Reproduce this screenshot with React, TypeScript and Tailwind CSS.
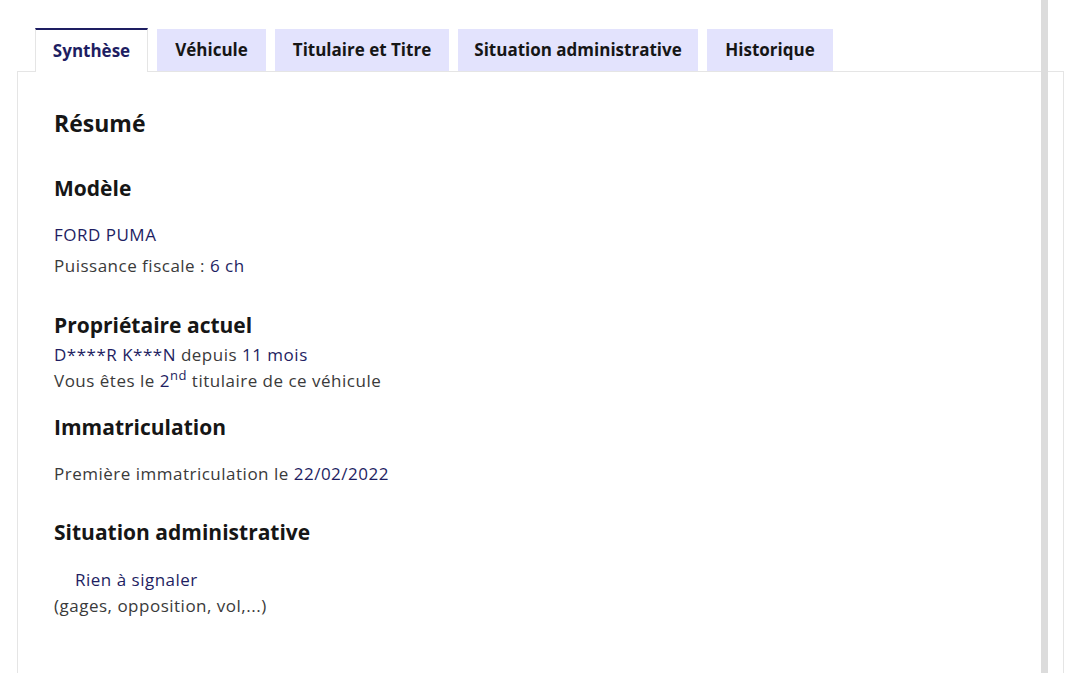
import React from "react";

const tabs = [
  { label: "Synthèse", w: "w-[113px]", active: true },
  { label: "Véhicule", w: "w-[109px]" },
  { label: "Titulaire et Titre", w: "w-[174px]" },
  { label: "Situation administrative", w: "w-[240px]" },
  { label: "Historique", w: "w-[126px]" },
];

export default function App() {
  return (
    <div
      className="relative h-[673px] overflow-hidden bg-white text-[#161616]"
      style={{ fontFamily: "'Open Sans', 'Noto Sans', sans-serif" }}
    >
      <div className="w-[1064px] pl-[17px] pt-[28px]">
        {/* onglets */}
        <ul className="flex h-[43px] items-end gap-[9px] pl-[18px]">
          {tabs.map((t) =>
            t.active ? (
              <li
                key={t.label}
                className={`${t.w} relative z-10 -mb-px flex h-[44px] items-center justify-center border-x border-t-2 border-x-[#e5e5e5] border-t-[#1e1e62] bg-white text-[17px] font-bold text-[#1e1e62]`}
              >
                {t.label}
              </li>
            ) : (
              <li
                key={t.label}
                className={`${t.w} flex h-[42px] items-center justify-center bg-[#e3e3fd] text-[17px] font-bold text-[#161616]`}
              >
                {t.label}
              </li>
            )
          )}
        </ul>

        {/* panneau */}
        <div className="h-[640px] border border-[#e5e5e5] px-9 pt-[35px]">
          <h2 className="text-[23px] font-bold leading-[32px]">Résumé</h2>

          <div className="text-[17px] leading-[26px] tracking-[0.5px]">
            <h3 className="mt-[35px] text-[21px] font-bold leading-[28px] tracking-normal">Modèle</h3>
            <p className="mt-[20px] text-[#1e1e62]">FORD PUMA</p>
            <p className="mt-[5px] text-[#3a3a3a]">
              Puissance fiscale : <span className="text-[#1e1e62]">6 ch</span>
            </p>

            <h3 className="mt-[32px] text-[21px] font-bold leading-[28px] tracking-normal">Propriétaire actuel</h3>
            <p className="mt-[3px] text-[#3a3a3a]">
              <span className="text-[#1e1e62]">D****R K***N</span> depuis{" "}
              <span className="text-[#1e1e62]">11 mois</span>
            </p>
            <p className="text-[#3a3a3a]">
              Vous êtes le{" "}
              <span className="text-[#1e1e62]">
                2<sup className="relative -top-[7px] align-baseline text-[13px] leading-none">nd</sup>
              </span>{" "}
              titulaire de ce véhicule
            </p>

            <h3 className="mt-[19px] text-[21px] font-bold leading-[28px] tracking-normal">Immatriculation</h3>
            <p className="mt-[20px] text-[#3a3a3a]">
              Première immatriculation le <span className="text-[#1e1e62]">22/02/2022</span>
            </p>

            <h3 className="mt-[31px] text-[21px] font-bold leading-[28px] tracking-normal">Situation administrative</h3>
            <p className="mt-[21px] pl-[21px] text-[#1e1e62]">Rien à signaler</p>
            <p className="text-[#3a3a3a]">(gages, opposition, vol,...)</p>
          </div>
        </div>
      </div>

      {/* barre de défilement */}
      <div className="absolute bottom-0 left-[1041px] top-0 w-[7px] bg-[#dcdcdc]" />
    </div>
  );
}
